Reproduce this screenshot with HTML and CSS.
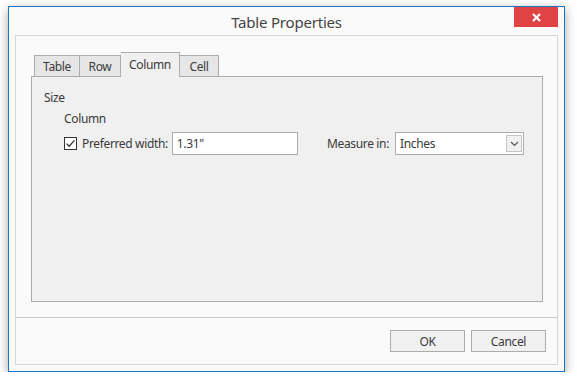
FILE: index.html
```html
<!DOCTYPE html>
<html>
<head>
<meta charset="utf-8">
<link rel="stylesheet" href="styles.css">
</head>
<body>
<div class="window">
  <div class="titlebar">
    <span class="title">Table Properties</span>
    <button class="close" aria-label="Close">
      <svg width="9" height="9" viewBox="0 0 9 9"><path d="M1 1 L8 8 M8 1 L1 8" stroke="#fff" stroke-width="2.2"/></svg>
    </button>
  </div>
  <div class="inner">
    <div class="tabarea">
      <div class="tabs">
        <div class="tab t-table">Table</div>
        <div class="tab t-row">Row</div>
        <div class="tab t-col active">Column</div>
        <div class="tab t-cell">Cell</div>
      </div>
      <div class="tabpanel">
        <div class="group">Size</div>
        <div class="sub">Column</div>
        <div class="row">
          <div class="left">
            <span class="check">
              <svg width="13" height="13" viewBox="0 0 13 13"><rect x="0.5" y="0.5" width="12" height="12" fill="#fff" stroke="#333"/><path d="M2.6 6.6 L5.2 9.3 L10.4 3.4" fill="none" stroke="#333" stroke-width="1.3"/></svg>
            </span>
            <span class="label">Preferred width:</span>
            <div class="input">1.31"</div>
          </div>
          <div class="right">
            <span class="label">Measure in:</span>
            <div class="combo">
              <span>Inches</span>
              <span class="drop">
                <svg width="9" height="6" viewBox="0 0 9 6"><path d="M1 1 L4.5 4.5 L8 1" fill="none" stroke="#555" stroke-width="1.2"/></svg>
              </span>
            </div>
          </div>
        </div>
      </div>
    </div>
    <div class="footer">
      <button class="btn">OK</button>
      <button class="btn">Cancel</button>
    </div>
  </div>
</div>
</body>
</html>
```

FILE: styles.css
```css
* { box-sizing: border-box; }
html, body { margin: 0; padding: 0; background: #ffffff; }
body {
  font-family: "Noto Sans", "Open Sans", sans-serif;
  font-size: 12px;
  letter-spacing: -0.35px;
  color: #3a3a3a;
  padding: 6px 0 0 8px;
}
.window {
  width: 557px;
  height: 366px;
  background: #fafafa;
  border: 1px solid #1c74c8;
  box-shadow: 0 3px 10px rgba(0,0,0,0.35);
  display: flex;
  flex-direction: column;
}
.titlebar {
  height: 28px;
  position: relative;
  display: flex;
  align-items: center;
  justify-content: center;
}
.title {
  font-size: 15px;
  letter-spacing: -0.2px;
  color: #444;
  margin-top: 2px;
}
.close {
  position: absolute;
  top: 0;
  right: 6px;
  width: 44px;
  height: 20px;
  border: none;
  padding: 0;
  background: #e04343;
  display: flex;
  align-items: center;
  justify-content: center;
}
.inner {
  flex: 1;
  margin: 0 6px 6px 6px;
  border: 1px solid #d6d6d6;
  display: flex;
  flex-direction: column;
}
.tabarea {
  flex: 1;
  padding: 16px 14px 15px 15px;
  display: flex;
  flex-direction: column;
}
.tabs {
  display: flex;
  align-items: flex-end;
  padding-left: 3px;
  height: 24px;
  position: relative;
  z-index: 1;
}
.tab {
  height: 21px;
  background: #e6e6e6;
  border: 1px solid #acacac;
  border-bottom: none;
  display: flex;
  align-items: center;
  justify-content: center;
}
.tab + .tab { border-left: none; }
.t-table { width: 46px; }
.t-row { width: 41px; }
.t-col { width: 59px; }
.t-cell { width: 39px; }
.tab.active {
  height: 25px;
  margin-bottom: -1px;
  background: #f0f0f0;
  padding-bottom: 2px;
}
.tabpanel {
  flex: 1;
  background: #f0f0f0;
  border: 1px solid #acacac;
  padding: 12px 18px 0 12px;
}
.group { height: 17px; line-height: 17px; }
.sub { height: 17px; line-height: 17px; margin-top: 4px; padding-left: 20px; }
.row {
  margin-top: 5px;
  display: flex;
  align-items: center;
  justify-content: space-between;
  padding-left: 20px;
}
.left, .right { display: flex; align-items: center; }
.check { width: 13px; height: 13px; display: flex; margin-right: 5px; }
.label { margin-right: 4px; }
.input {
  width: 126px;
  height: 23px;
  background: #fff;
  border: 1px solid #acacac;
  padding-left: 4px;
  line-height: 21px;
}
.right .label { margin-right: 6px; }
.combo {
  width: 129px;
  height: 23px;
  background: #fff;
  border: 1px solid #acacac;
  padding: 2px 1px 2px 4px;
  display: flex;
  align-items: center;
  justify-content: space-between;
}
.drop {
  width: 16px;
  height: 17px;
  background: #f0f0f0;
  border: 1px solid #c4c4c4;
  display: flex;
  align-items: center;
  justify-content: center;
}
.footer {
  border-top: 1px solid #c8c8c8;
  padding: 12px 11px 12px 0;
  display: flex;
  justify-content: flex-end;
  gap: 6px;
}
.btn {
  width: 75px;
  height: 22px;
  background: #f0f0f0;
  border: 1px solid #acacac;
  font-family: inherit;
  font-size: 12px;
  letter-spacing: -0.35px;
  color: #3a3a3a;
  padding: 0;
}
```
